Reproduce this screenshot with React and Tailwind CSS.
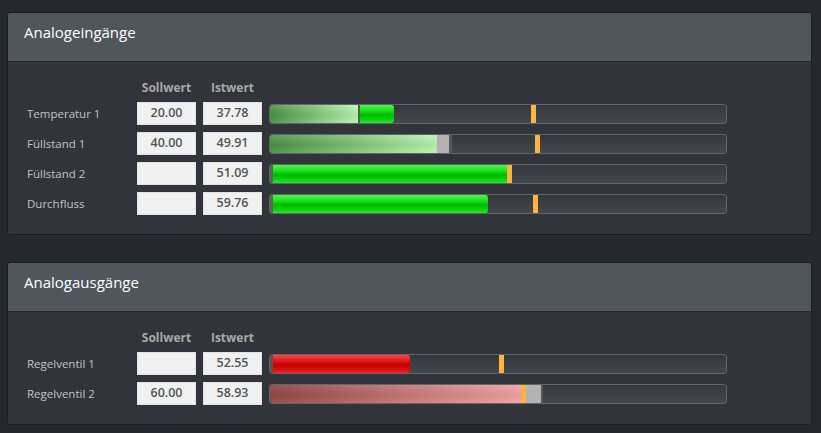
const GREEN = 'bg-[linear-gradient(to_bottom,#52f552_0%,#1ce41c_30%,#00b800_55%,#0ad20a_80%,#26ea26_100%)]'
const PALE_GREEN = 'bg-[linear-gradient(to_bottom,rgba(255,255,255,0.12),rgba(0,0,0,0.06)_55%,rgba(255,255,255,0.06)),linear-gradient(to_right,#4a9242,#b9f5b1)]'
const RED = 'bg-[linear-gradient(to_bottom,#f74a4a_0%,#e41c1c_30%,#c20000_55%,#dc0e0e_82%,#f02424_100%)]'
const PALE_RED = 'bg-[linear-gradient(to_bottom,rgba(255,255,255,0.08),rgba(0,0,0,0.06)_55%,rgba(255,255,255,0.05)),linear-gradient(to_right,#934646,#f3a3a3)]'

const SEG = {
  green: GREEN,
  pale: PALE_GREEN,
  red: RED,
  palered: PALE_RED,
  capg: 'bg-[#4f6d4b]',
  capr: 'bg-[#6e4a4a]',
  grey: 'bg-[#b2b2b2]',
  edge: 'bg-[#53585d]',
  sep: 'bg-[#3f6b3a]',
  mark: 'bg-[#ffb343]',
}

const inputs = [
  {
    name: 'Temperatur 1', soll: '20.00', ist: '37.78', marker: 261,
    segs: [['pale', 88, 'rounded-l-[2px]'], ['sep', 2], ['green', 34, 'rounded-r-[3px]']],
  },
  {
    name: 'Füllstand 1', soll: '40.00', ist: '49.91', marker: 265,
    segs: [['pale', 167, 'rounded-l-[2px]'], ['grey', 12], ['edge', 3]],
  },
  {
    name: 'Füllstand 2', soll: '', ist: '51.09', marker: 237,
    segs: [['capg', 3, 'rounded-l-[2px]'], ['green', 234]],
  },
  {
    name: 'Durchfluss', soll: '', ist: '59.76', marker: 263,
    segs: [['capg', 3, 'rounded-l-[2px]'], ['green', 215, 'rounded-r-[3px]']],
  },
]

const outputs = [
  {
    name: 'Regelventil 1', soll: '', ist: '52.55', marker: 229,
    segs: [['capr', 3, 'rounded-l-[2px]'], ['red', 137, 'rounded-r-[3px]']],
  },
  {
    name: 'Regelventil 2', soll: '60.00', ist: '58.93', marker: null,
    segs: [['palered', 251, 'rounded-l-[2px]'], ['mark', 5], ['grey', 15], ['edge', 2]],
  },
]

function Bar({ segs, marker }) {
  return (
    <div className="relative w-[458px] h-[20px] rounded-[3px] border border-[#626569] bg-[linear-gradient(to_bottom,#34383e,#43484b)] overflow-hidden">
      <div className="flex h-full">
        {segs.map(([k, w, extra], i) => (
          <div key={i} className={`${SEG[k]} ${extra || ''} h-full shrink-0`} style={{ width: w }} />
        ))}
      </div>
      {marker != null && (
        <div className="absolute top-0 h-full w-[5px] bg-[#ffb343]" style={{ left: marker }} />
      )}
    </div>
  )
}

function ValueBox({ v }) {
  return (
    <div className="w-[59px] h-[23px] bg-[#f1f1f1] border border-[#e2e2e2] flex items-center justify-center text-[12.5px] font-semibold text-[#4f5559]">
      {v}
    </div>
  )
}

function Panel({ title, rows }) {
  return (
    <div className="w-[805px] ml-[7px] rounded-[3px] border border-[#1b1e21] overflow-hidden">
      <div className="h-[49px] bg-[#4f575d] border-b border-[#23272b] pl-[16px] pt-[8px] text-[15px] text-white">
        {title}
      </div>
      <div className="bg-[#31353b] pl-[19px] pt-[18px] pb-[19px]">
        <div className="flex h-[16px] items-center text-[12px] font-bold text-[#a9a9a9]">
          <div className="w-[110px]" />
          <div className="w-[59px] text-center">Sollwert</div>
          <div className="w-[7px]" />
          <div className="w-[59px] text-center">Istwert</div>
        </div>
        <div className="mt-[6px] flex flex-col gap-[7px]">
          {rows.map(r => (
            <div key={r.name} className="flex items-center">
              <div className="w-[110px] text-[11.5px] text-[#c3c3c3]">{r.name}</div>
              <ValueBox v={r.soll} />
              <div className="w-[7px]" />
              <ValueBox v={r.ist} />
              <div className="w-[7px]" />
              <Bar segs={r.segs} marker={r.marker} />
            </div>
          ))}
        </div>
      </div>
    </div>
  )
}

export default function App() {
  return (
    <div className="w-[821px] h-[433px] bg-[#25282c] pt-[12px] font-['Open_Sans',sans-serif] overflow-hidden">
      <Panel title="Analogeingänge" rows={inputs} />
      <div className="h-[27px]" />
      <Panel title="Analogausgänge" rows={outputs} />
    </div>
  )
}
